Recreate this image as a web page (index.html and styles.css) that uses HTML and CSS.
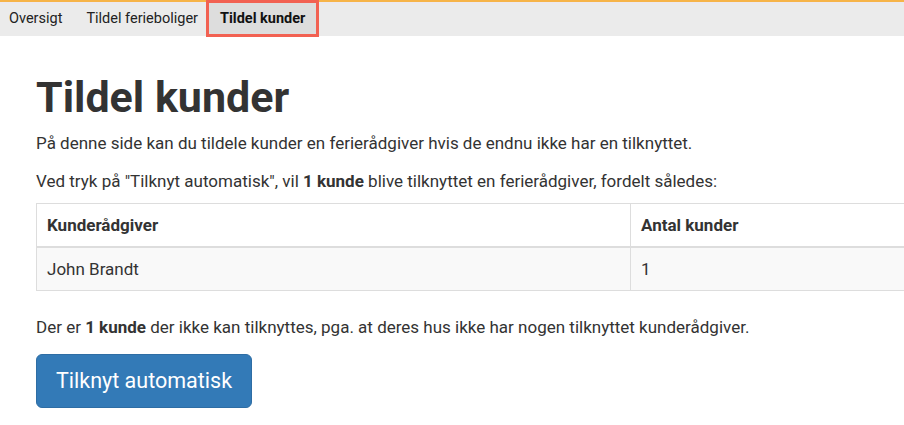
FILE: index.html
```html
<!DOCTYPE html>
<html lang="da">
<head>
<meta charset="utf-8">
<title>Tildel kunder</title>
<link rel="stylesheet" href="styles.css">
</head>
<body>
<nav class="topnav">
  <a class="nav-item first">Oversigt</a>
  <a class="nav-item">Tildel ferieboliger</a>
  <a class="nav-item active">Tildel kunder</a>
</nav>
<main class="content">
  <h1 class="title">Tildel kunder</h1>
  <p class="text">På denne side kan du tildele kunder en ferierådgiver hvis de endnu ikke har en tilknyttet.</p>
  <p class="text lead-in">Ved tryk på "Tilknyt automatisk", vil <b>1 kunde</b> blive tilknyttet en ferierådgiver, fordelt således:</p>
  <table class="grid">
    <thead>
      <tr><th class="col1">Kunderådgiver</th><th>Antal kunder</th></tr>
    </thead>
    <tbody>
      <tr><td>John Brandt</td><td>1</td></tr>
    </tbody>
  </table>
  <p class="text note">Der er <b>1 kunde</b> der ikke kan tilknyttes, pga. at deres hus ikke har nogen tilknyttet kunderådgiver.</p>
  <button class="btn">Tilknyt automatisk</button>
</main>
</body>
</html>
```
FILE: styles.css
```css
html, body { margin: 0; padding: 0; }
body {
  font-family: Roboto, "Liberation Sans", sans-serif;
  color: #333;
  background: #fff;
  overflow: hidden;
  width: 904px;
}
.topnav {
  display: flex;
  height: 36px;
  background: linear-gradient(#f6b448 0 2px, #ece9ee 2px 4px, #ebebeb 4px);
  font-size: 14.5px;
}
.nav-item {
  display: flex;
  align-items: center;
  padding: 0 12px;
  color: #222;
  cursor: pointer;
}
.nav-item.first { padding-left: 9px; }
.nav-item.active {
  background: #dddddd;
  border: 3px solid #f26152;
  padding: 0 11px;
  margin: 0 -3px 0 -4px;
  font-weight: 700;
  color: #111;
  height: 37px;
  box-sizing: border-box;
}
.content {
  padding: 0 36px;
}
.title {
  font-size: 43px;
  font-weight: 700;
  margin: 36px 0 9px;
  line-height: 50px;
  color: #333;
}
.text {
  font-size: 17px;
  line-height: 24px;
  margin: 0 0 14px;
}
.text.lead-in { margin-bottom: 10px; }
.grid {
  border-collapse: collapse;
  width: 1000px;
  font-size: 17px;
}
.grid th, .grid td {
  border: 1px solid #ddd;
  padding: 9px 10px;
  line-height: 24px;
  text-align: left;
}
.grid th { font-weight: 700; border-bottom: 2px solid #ddd; }
.grid .col1 { width: 573px; }
.grid tbody tr { background: #f9f9f9; }
.text.note { margin: 24px 0 14px; }
.btn {
  font-family: Roboto, "Liberation Sans", sans-serif;
  font-size: 21.5px;
  color: #fff;
  background: #337ab7;
  border: 1px solid #2e6da4;
  border-radius: 6px;
  padding: 13px 19px;
  line-height: 26px;
  margin-top: 1px;
  cursor: pointer;
}
```
